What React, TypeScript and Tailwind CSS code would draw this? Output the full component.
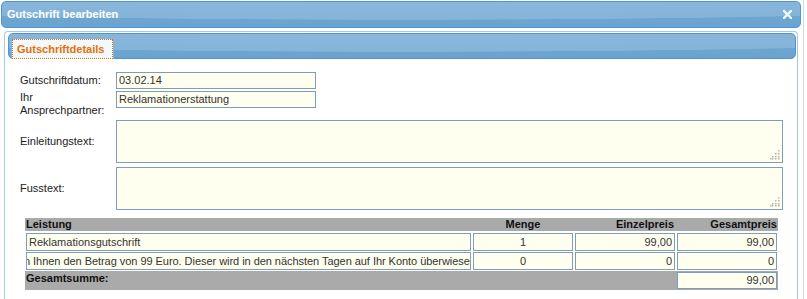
import React from "react";

const headerBg =
  "bg-[radial-gradient(651px_18px_at_50%_0,#8bb8dc_0%,#85b4d9_97%,transparent_100%),linear-gradient(180deg,#73aad5_0%,#6aa3cf_100%)]";

function Grip() {
  const dots: [number, number][] = [
    [8, 0],
    [8, 3],
    [5, 3],
    [8, 6],
    [5, 6],
    [2, 6],
    [8, 8],
    [5, 8],
    [2, 8],
    [0, 8],
  ];
  return (
    <svg
      width="10"
      height="10"
      viewBox="0 0 10 10"
      className="absolute right-[2px] bottom-[2px]"
    >
      {dots.map(([x, y], i) => (
        <rect key={i} x={x} y={y} width="1.5" height="1.5" fill="#b4b4a8" />
      ))}
    </svg>
  );
}

export default function App() {
  const input =
    "border border-[#7f9db9] bg-[#ffffef] text-[#333] overflow-hidden whitespace-nowrap";
  const cols = "grid grid-cols-[445px_100px_100px_100px] gap-x-[2px] px-[1px]";
  return (
    <div className="w-[807px] h-[299px] bg-white overflow-hidden flex font-['Liberation_Sans',Arial,sans-serif] text-[11px] text-[#222]">
      <div className="w-[803px] pl-[1px] pt-[1px] flex flex-col">
        {/* Title bar */}
        <div
          className={`w-[800px] h-[27px] shrink-0 rounded-[5px] border border-[#4f95d2] ${headerBg} flex items-center justify-between pl-[5px] pr-[8px]`}
        >
          <span className="text-white font-bold text-[11px] leading-[13px]">
            Gutschrift bearbeiten
          </span>
          <svg width="9" height="9" viewBox="0 0 9 9">
            <path
              d="M1 1 L8 8 M8 1 L1 8"
              stroke="#f2f6fa"
              strokeWidth="2.4"
              strokeLinecap="square"
            />
          </svg>
        </div>

        {/* Panel */}
        <div className="ml-[3px] mt-[3px] w-[794px] flex-1 border border-b-0 border-[#a6c9e2] rounded-t-[4px] pt-[1px] pl-[3px] pr-[1px]">
          {/* Tab nav */}
          <div
            className={`h-[26px] rounded-[5px] border border-[#4f95d2] ${headerBg} pl-[2px] flex items-start`}
          >
            <div className="mt-[4px] w-[103px] h-[21px] border border-b-0 border-[#79b7e7] rounded-t-[5px] bg-[#f5f8f9]">
              <div className="h-full border border-dotted border-[#e17009] pl-[4px] flex items-center text-[#e17009] font-bold leading-[13px]">
                Gutschriftdetails
              </div>
            </div>
          </div>

          {/* Form */}
          <div className="mt-[13px] pl-[12px] flex flex-col">
            <div className="flex items-center h-[17px]">
              <div className="w-[96px] leading-[13px]">Gutschriftdatum:</div>
              <div className={`${input} w-[200px] h-[17px] pl-[2px] leading-[15px]`}>
                03.02.14
              </div>
            </div>
            <div className="mt-[2px] flex items-start h-[27px]">
              <div className="w-[96px] leading-[13px]">
                Ihr
                <br />
                Ansprechpartner:
              </div>
              <div className={`${input} w-[200px] h-[17px] pl-[2px] leading-[15px]`}>
                Reklamationerstattung
              </div>
            </div>
            <div className="mt-[2px] flex items-center h-[43px]">
              <div className="w-[96px] leading-[13px]">Einleitungstext:</div>
              <div className={`${input} relative w-[667px] h-[43px]`}>
                <Grip />
              </div>
            </div>
            <div className="mt-[4px] flex items-center h-[43px]">
              <div className="w-[96px] leading-[13px]">Fusstext:</div>
              <div className={`${input} relative w-[667px] h-[43px]`}>
                <Grip />
              </div>
            </div>

            {/* Table */}
            <div className="mt-[8px] ml-[5px] w-[753px] flex flex-col">
              <div className={`${cols} h-[13px] bg-[#aaaaaa] font-bold leading-[13px] text-[#111]`}>
                <div>Leistung</div>
                <div className="text-center">Menge</div>
                <div className="text-right pr-[1px]">Einzelpreis</div>
                <div className="text-right">Gesamtpreis</div>
              </div>
              <div className={`${cols} mt-[2px] h-[18px] leading-[16px]`}>
                <div className={`${input} pl-[2px]`}>Reklamationsgutschrift</div>
                <div className={`${input} text-center`}>1</div>
                <div className={`${input} text-right pr-[2px]`}>99,00</div>
                <div className={`${input} text-right pr-[2px]`}>99,00</div>
              </div>
              <div className={`${cols} mt-[1px] h-[18px] leading-[16px]`}>
                <div className={`${input} flex justify-start`}>
                  <span className="shrink-0 ml-[-3px] tracking-[-0.045px]">
                    n Ihnen den Betrag von 99 Euro. Dieser wird in den nächsten Tagen auf Ihr Konto überwiesen.
                  </span>
                </div>
                <div className={`${input} text-center`}>0</div>
                <div className={`${input} text-right pr-[2px]`}>0</div>
                <div className={`${input} text-right pr-[2px]`}>0</div>
              </div>
              <div className={`${cols} mt-[1px] h-[19px] bg-[#aaaaaa]`}>
                <div className="col-span-3 font-bold leading-[13px] pt-[1px] text-[#111]">
                  Gesamtsumme:
                </div>
                <div className={`${input} mt-[1px] h-[17px] leading-[15px] text-right pr-[2px]`}>
                  99,00
                </div>
              </div>
            </div>
          </div>
        </div>
      </div>
      <div className="w-[1px] h-full bg-[#cfdbe7]" />
    </div>
  );
}
